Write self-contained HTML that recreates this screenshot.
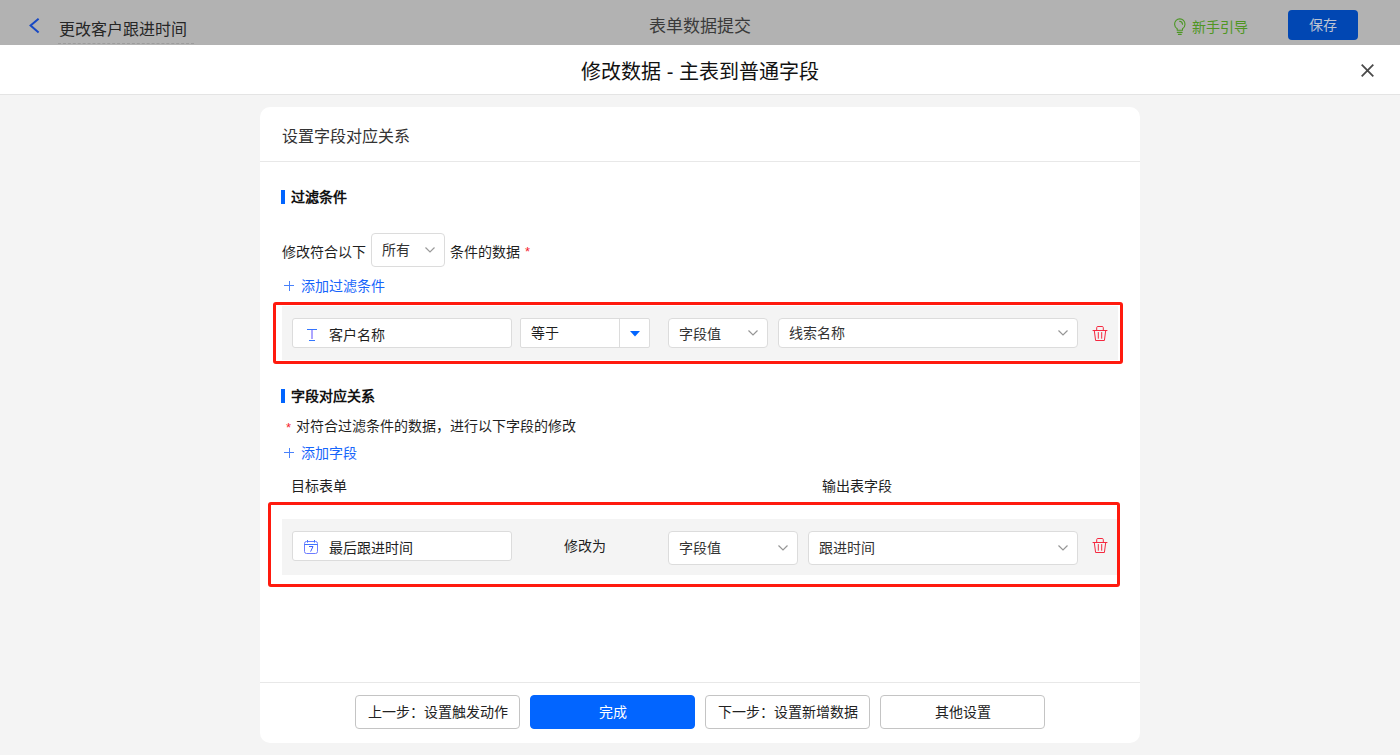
<!DOCTYPE html>
<html lang="zh-CN">
<head>
<meta charset="utf-8">
<title>修改数据</title>
<style>
*{box-sizing:border-box;margin:0;padding:0}
html,body{width:1400px;height:755px;overflow:hidden}
body{position:relative;background:#f4f4f4;font-family:"Liberation Sans",sans-serif;font-size:14px;color:#1f1f1f}
.abs{position:absolute}
.t{position:absolute;white-space:nowrap;line-height:20px;font-size:14px}
.b{font-weight:bold}
.blue{color:#1765fb}
.red{color:#f5222d}
/* top dimmed bar */
#topbar{left:0;top:0;width:1400px;height:45px;background:#b2b2b2}
#subbar{left:0;top:45px;width:1400px;height:50px;background:#fff;border-bottom:1px solid #e4e4e4}
#card{left:260px;top:107px;width:880px;height:636px;background:#fff;border-radius:10px}
.hline{position:absolute;height:1px;background:#e8e8e8}
.bar{position:absolute;width:4px;height:14px;background:#0265ff}
.box{position:absolute;background:#fff;border:1px solid #dcdcdc;border-radius:4px}
.row{position:absolute;background:#f4f4f4}
.redbox{position:absolute;border:3px solid #ff1a0e;border-radius:3px}
.btn{position:absolute;top:695px;width:165px;height:34px;border:1px solid #c4c4c4;border-radius:4px;background:#fff;text-align:center;line-height:32px;font-size:14px;color:#222}
.btn.pri{background:#0265ff;border-color:#0265ff;color:#fff}
svg{position:absolute;overflow:visible}
</style>
</head>
<body>
<!-- dimmed application header -->
<div id="topbar" class="abs"></div>
<svg style="left:29px;top:18px" width="11" height="15" viewBox="0 0 11 15"><path d="M9.6 0.8 L1.6 7.6 L9.6 14.4" fill="none" stroke="#1748c4" stroke-width="2"/></svg>
<div class="t" id="t1" style="left:59px;top:20px;font-size:16px;color:#262626">更改客户跟进时间</div>
<div class="abs" style="left:58px;top:43px;width:136px;height:0;border-top:1px dashed #9c9c9c"></div>
<div class="t" id="t2" style="left:648.5px;top:17px;width:102px;font-size:17px;color:#3a3a3a">表单数据提交</div>
<svg id="bulb" style="left:1174px;top:18px" width="12" height="17" viewBox="0 0 12 17"><path d="M3.2 12.2 V10.7 C1.6 9.7 0.6 8.1 0.6 6.2 C0.6 3.2 2.9 0.9 5.8 0.9 C8.7 0.9 11 3.2 11 6.2 C11 8.1 10 9.7 8.5 10.7 V12.2 Z M3.3 14.4 H8.1 M4.4 16.4 H7.2 M5.6 3.3 C7.2 3.4 8.4 4.6 8.5 6.3" fill="none" stroke="#4b9623" stroke-width="1.1" stroke-linecap="round" stroke-linejoin="round"/></svg>
<div class="t" id="t3" style="left:1192px;top:17px;color:#4f9622">新手引导</div>
<div class="abs" style="left:1288px;top:10px;width:70px;height:30px;background:#0147b3;border-radius:4px"></div>
<div class="t" id="t4" style="left:1309px;top:15px;color:#bdc4d2">保存</div>

<!-- modal title bar -->
<div id="subbar" class="abs"></div>
<div class="t" id="t5" style="left:560px;top:58.5px;width:280px;text-align:center;font-size:20px;line-height:26px;color:#111">修改数据 - 主表到普通字段</div>
<svg style="left:1361px;top:63.7px" width="13" height="13" viewBox="0 0 13 13"><path d="M0.7 0.7 L12.3 12.3 M12.3 0.7 L0.7 12.3" fill="none" stroke="#4a4a4a" stroke-width="1.8"/></svg>

<!-- card -->
<div id="card" class="abs"></div>
<div class="t" id="t6" style="left:281.5px;top:126.5px;font-size:16px;color:#333">设置字段对应关系</div>
<div class="hline" style="left:260px;top:161px;width:880px"></div>

<!-- section 1 -->
<div class="bar" style="left:281px;top:190px"></div>
<div class="t b" id="t7" style="left:291px;top:187px;color:#111">过滤条件</div>
<div class="t" id="t8" style="left:282px;top:241.5px">修改符合以下</div>
<div class="box" style="left:371px;top:233px;width:74px;height:34px"></div>
<div class="t" id="t9" style="left:381.5px;top:240px;color:#333">所有</div>
<svg style="left:425px;top:247px" width="10" height="6" viewBox="0 0 10 6"><path d="M0.5 0.5 L5 5 L9.5 0.5" fill="none" stroke="#9a9a9a" stroke-width="1.2"/></svg>
<div class="t" id="t10" style="left:450px;top:241.5px">条件的数据</div>
<div class="t red" id="t11" style="left:525px;top:242px;font-size:13px">*</div>
<svg style="left:284px;top:281px" width="10" height="10" viewBox="0 0 10 10"><path d="M5.5 0 V9.6 M0 4.5 H10" fill="none" stroke="#4a82fb" stroke-width="1" shape-rendering="crispEdges"/></svg>
<div class="t blue" id="t12" style="left:301px;top:276px">添加过滤条件</div>

<div class="row" style="left:282px;top:306px;width:836px;height:54px"></div>
<div class="box" style="left:292px;top:318px;width:220px;height:30px;border-radius:3px"></div>
<svg style="left:307px;top:329px" width="10" height="12" viewBox="0 0 10 12"><path d="M0 0.5 H10 M2 11.5 H8" fill="none" stroke="#3377ff" stroke-width="1"/><path d="M5 0.5 V10" fill="none" stroke="#5a4cff" stroke-width="1"/></svg>
<div class="t" id="t13" style="left:328.5px;top:325px">客户名称</div>
<div class="box" style="left:520px;top:318px;width:130px;height:30px;border-radius:2px"></div>
<div class="abs" style="left:619px;top:319px;width:1px;height:28px;background:#dcdcdc"></div>
<div class="t" id="t14" style="left:530.5px;top:323px">等于</div>
<svg style="left:630px;top:331px" width="10" height="6" viewBox="0 0 10 6"><path d="M0 0 H10 L5 5.6 Z" fill="#0265ff"/></svg>
<div class="box" style="left:668px;top:318px;width:100px;height:30px"></div>
<div class="t" id="t15" style="left:678.5px;top:324px;color:#333">字段值</div>
<svg style="left:748px;top:330px" width="10" height="6" viewBox="0 0 10 6"><path d="M0.5 0.5 L5 5 L9.5 0.5" fill="none" stroke="#969696" stroke-width="1.2"/></svg>
<div class="box" style="left:778px;top:318px;width:300px;height:30px"></div>
<div class="t" id="t16" style="left:788.5px;top:323px;color:#333">线索名称</div>
<svg style="left:1058px;top:330px" width="10" height="6" viewBox="0 0 10 6"><path d="M0.5 0.5 L5 5 L9.5 0.5" fill="none" stroke="#969696" stroke-width="1.2"/></svg>
<svg class="trash" style="left:1093px;top:326px" width="14" height="15" viewBox="0 0 14 15"><path d="M0 4.5 H14 M3.7 4.5 V1.6 Q3.7 0.5 4.8 0.5 H9.2 Q10.3 0.5 10.3 1.6 V4.5 M1.3 4.5 L2.6 14.5 H11.4 L12.7 4.5 M5.3 6.5 V12.3 M8.7 6.5 V12.3" fill="none" stroke="#f5283f" stroke-width="1" stroke-linecap="round"/></svg>
<div class="redbox" style="left:273px;top:302px;width:850px;height:62px"></div>

<!-- section 2 -->
<div class="bar" style="left:281px;top:389px"></div>
<div class="t b" id="t17" style="left:291px;top:386px;color:#111">字段对应关系</div>
<div class="t red" id="t18" style="left:286px;top:418px;font-size:13px">*</div>
<div class="t" id="t19" style="left:296px;top:416px">对符合过滤条件的数据，进行以下字段的修改</div>
<svg style="left:284px;top:448px" width="10" height="10" viewBox="0 0 10 10"><path d="M5.5 0 V9.6 M0 4.5 H10" fill="none" stroke="#4a82fb" stroke-width="1" shape-rendering="crispEdges"/></svg>
<div class="t blue" id="t20" style="left:301px;top:443px">添加字段</div>
<div class="t" id="t21" style="left:291px;top:476px">目标表单</div>
<div class="t" id="t22" style="left:821.5px;top:476px">输出表字段</div>

<div class="row" style="left:282px;top:519px;width:836px;height:56px"></div>
<div class="box" style="left:292px;top:531px;width:220px;height:30px;border-radius:3px"></div>
<svg id="cal" style="left:304px;top:540px" width="14" height="14" viewBox="0 0 14 14"><rect x="0.5" y="1.5" width="13" height="12" rx="2" fill="none" stroke="#6d7cff" stroke-width="1"/><path d="M0.5 4.5 H13.5 M3.5 0 V2.6 M10.5 0 V2.6" fill="none" stroke="#3f73ff" stroke-width="1"/><path d="M5 6.5 H9 L6.6 11.6" fill="none" stroke="#3f5fff" stroke-width="1"/></svg>
<div class="t" id="t23" style="left:328.5px;top:538px">最后跟进时间</div>
<div class="t" id="t24" style="left:564px;top:535.5px">修改为</div>
<div class="box" style="left:668px;top:531px;width:130px;height:34px"></div>
<div class="t" id="t25" style="left:679px;top:538px;color:#333">字段值</div>
<svg style="left:778px;top:545px" width="10" height="6" viewBox="0 0 10 6"><path d="M0.5 0.5 L5 5 L9.5 0.5" fill="none" stroke="#969696" stroke-width="1.2"/></svg>
<div class="box" style="left:808px;top:531px;width:270px;height:34px"></div>
<div class="t" id="t26" style="left:818.5px;top:538px;color:#333">跟进时间</div>
<svg style="left:1058px;top:545px" width="10" height="6" viewBox="0 0 10 6"><path d="M0.5 0.5 L5 5 L9.5 0.5" fill="none" stroke="#969696" stroke-width="1.2"/></svg>
<svg class="trash" style="left:1093px;top:538px" width="14" height="15" viewBox="0 0 14 15"><path d="M0 4.5 H14 M3.7 4.5 V1.6 Q3.7 0.5 4.8 0.5 H9.2 Q10.3 0.5 10.3 1.6 V4.5 M1.3 4.5 L2.6 14.5 H11.4 L12.7 4.5 M5.3 6.5 V12.3 M8.7 6.5 V12.3" fill="none" stroke="#f5283f" stroke-width="1" stroke-linecap="round"/></svg>
<div class="redbox" style="left:268px;top:502px;width:852px;height:85px"></div>

<!-- footer -->
<div class="hline" style="left:260px;top:682px;width:880px"></div>
<div class="btn" style="left:355px">上一步：设置触发动作</div>
<div class="btn pri" style="left:530px">完成</div>
<div class="btn" style="left:705px">下一步：设置新增数据</div>
<div class="btn" style="left:880px">其他设置</div>
</body>
</html>
